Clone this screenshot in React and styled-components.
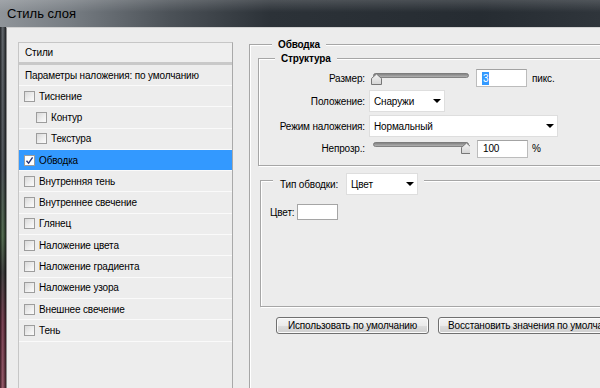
import React from 'react';
import styled, { createGlobalStyle } from 'styled-components';

const Global = createGlobalStyle`
  html, body { margin: 0; padding: 0; background: #ececec; }
  body {
    font-family: "Liberation Sans", Arial, sans-serif;
    font-size: 10px;
    letter-spacing: -0.15px;
    color: #000;
  }
  #root { width: 600px; height: 388px; overflow: hidden; }
`;

const Window = styled.div`
  width: 600px;
  height: 388px;
  display: flex;
  flex-direction: column;
  overflow: hidden;
`;

const TitleBar = styled.div`
  height: 27px;
  flex: none;
  display: flex;
  align-items: center;
  padding-left: 7px;
  background:
    linear-gradient(to bottom, rgba(255,255,255,0.16), rgba(255,255,255,0) 45%),
    linear-gradient(to right, #8f9499 0%, #767c82 12%, #4c5258 28%, #2c3238 45%, #262c32 80%, #2f353b 100%);
  font-family: "Liberation Sans", sans-serif;
  font-size: 13px;
  letter-spacing: 0;
  color: #000;
`;

const Body = styled.div`
  flex: 1;
  display: flex;
  min-height: 0;
`;

const SideFrame = styled.div`
  width: 6px;
  flex: none;
  background:
    linear-gradient(to right, rgba(0,0,0,0.55) 0, rgba(255,255,255,0.14) 45%, rgba(0,0,0,0.6) 100%),
    linear-gradient(to bottom, #4a5056 0%, #3a4046 40%, #3d5a3a 58%, #2a2a2a 68%, #6b2a3e 82%, #8a4456 100%);
`;

const Content = styled.div`
  flex: 1;
  min-width: 0;
  display: flex;
  align-items: flex-start;
  padding: 14px 0 0 11px;
  background: #ececec;
  border-top: 1px solid #d2d2d2;
  border-left: 1px solid #8a8a8a;
  overflow: hidden;
`;

/* ---------- Left list ---------- */
const StylesList = styled.div`
  width: 215px;
  height: 400px;
  flex: none;
  box-sizing: border-box;
  border: 1px solid #c6c6c6;
  border-right-color: #a9a9a9;
  background: #ededed;
`;

const ListHeader = styled.div`
  height: 19px;
  display: flex;
  align-items: center;
  padding-left: 6px;
  border-bottom: 3px solid #c9c9c9;
  background: #efefef;
`;

const ListRow = styled.div`
  box-sizing: border-box;
  height: ${p => p.$h}px;
  display: flex;
  align-items: center;
  gap: 4px;
  padding-left: ${p => p.$indent}px;
  border-bottom: 1px solid #fafafa;
  background: ${p => (p.$selected ? '#3399ff' : 'transparent')};
`;

const Box = styled.span`
  box-sizing: border-box;
  width: 11px;
  height: 11px;
  flex: none;
  display: flex;
  align-items: center;
  justify-content: center;
  border: 1px solid #9d9d9d;
  background: ${p =>
    p.$checked ? '#ffffff' : 'linear-gradient(135deg, #d9d9d9 0%, #f0f0f0 60%, #fbfbfb 100%)'};
`;

function CheckBox({ checked }) {
  return (
    <Box $checked={checked}>
      {checked && (
        <svg width="9" height="9" viewBox="0 0 9 9">
          <path d="M1.5 4.8 L3.6 7.2 L7.6 1.3" fill="none" stroke="#22337a" strokeWidth="1.4" />
        </svg>
      )}
    </Box>
  );
}

/* ---------- Right side ---------- */
const RightPane = styled.div`
  margin: 2px 0 0 16px;
  flex: none;
  width: 420px;
`;

const Group = styled.div`
  border: 1px solid #a6a6a6;
  box-shadow: inset 1px 1px 0 #ffffff, 1px 1px 0 #ffffff;
  margin-top: ${p => p.$mt || 0}px;
  margin-left: ${p => p.$ml || 0}px;
  padding: 0 0 ${p => p.$pb || 0}px ${p => p.$pl || 0}px;
`;

const Legend = styled.div`
  position: relative;
  width: max-content;
  height: ${p => p.$h}px;
  display: flex;
  align-items: center;
  gap: ${p => p.$gap || 5}px;
  margin: ${p => -p.$up}px 0 0 ${p => p.$ml}px;
  padding: 0 ${p => p.$pr || 6}px 0 ${p => p.$plx || 6}px;
  background: #ececec;
  font-weight: ${p => (p.$bold ? 'bold' : 'normal')};
`;

const FormRow = styled.div`
  display: flex;
  align-items: center;
  height: ${p => p.$h}px;
  margin-top: ${p => p.$mt}px;
`;

const Label = styled.span`
  width: 106px;
  flex: none;
  text-align: right;
  margin-right: 4px;
`;

const SliderSvg = styled.svg`
  flex: none;
  align-self: flex-start;
  margin-top: ${p => p.$top}px;
`;

function Slider({ pos, top }) {
  const tx = pos === 'end' ? 92 : 2;
  return (
    <SliderSvg $top={top} width="101" height="13" viewBox="0 0 101 13">
      <defs>
        <linearGradient id={`trk${pos}`} x1="0" y1="0" x2="0" y2="1">
          <stop offset="0" stopColor="#7b7b7b" />
          <stop offset="1" stopColor="#b9b9b9" />
        </linearGradient>
        <linearGradient id={`thm${pos}`} x1="0" y1="0" x2="0" y2="1">
          <stop offset="0" stopColor="#f4f4f4" />
          <stop offset="1" stopColor="#d4d4d4" />
        </linearGradient>
      </defs>
      <rect x="4.5" y="0.5" width="95" height="4" rx="2" fill={`url(#trk${pos})`} stroke="#6f6f6f" strokeWidth="0.8" />
      <path
        d={`M${tx + 5.5} 1 L${tx + 10.5} 5.5 L${tx + 10.5} 11.5 L${tx + 0.5} 11.5 L${tx + 0.5} 5.5 Z`}
        fill={`url(#thm${pos})`}
        stroke="#777"
        strokeWidth="1"
      />
    </SliderSvg>
  );
}

const NumInput = styled.div`
  box-sizing: border-box;
  width: 51px;
  height: 18px;
  flex: none;
  margin-left: ${p => p.$ml}px;
  display: flex;
  align-items: center;
  padding-left: 5px;
  background: #fff;
  border: 1px solid #bcbcbc;
  border-top-color: #a3a3a3;
`;

const Selected = styled.span`
  background: #3399ff;
  color: #fff;
  padding: 0 1px;
  line-height: 13px;
`;

const Unit = styled.span`
  margin-left: ${p => p.$ml}px;
`;

const SelectBox = styled.div`
  box-sizing: border-box;
  width: ${p => p.$w}px;
  height: ${p => p.$h}px;
  flex: none;
  display: flex;
  align-items: center;
  justify-content: space-between;
  padding: 0 3px 0 4px;
  background: #fff;
  border: 1px solid #dedede;
  font-weight: normal;
`;

function Select({ w, h = 22, children }) {
  return (
    <SelectBox $w={w} $h={h}>
      <span>{children}</span>
      <svg width="8" height="4" viewBox="0 0 8 4">
        <path d="M0 0 H8 L4 4 Z" fill="#000" />
      </svg>
    </SelectBox>
  );
}

const ColorRow = styled.div`
  display: flex;
  align-items: center;
  gap: 3px;
  height: 16px;
  margin-top: 9px;
  padding-left: 9px;
`;

const Swatch = styled.span`
  box-sizing: border-box;
  width: 41px;
  height: 16px;
  background: #fff;
  border: 1px solid #a5a5a5;
`;

const ButtonRow = styled.div`
  display: flex;
  gap: 9px;
  margin: 10px 0 0 18px;
`;

const Button = styled.div`
  box-sizing: border-box;
  height: 17px;
  flex: none;
  width: ${p => (p.$w ? `${p.$w}px` : 'auto')};
  padding: 0 9px;
  display: flex;
  align-items: center;
  justify-content: center;
  white-space: nowrap;
  border: 1px solid #707070;
  border-radius: 3px;
  background: linear-gradient(to bottom, #f4f4f4 0%, #ebebeb 50%, #dddddd 51%, #cfcfcf 100%);
  box-shadow: inset 0 0 0 1px #fbfbfb;
`;

const items = [
  { label: 'Тиснение' },
  { label: 'Контур', sub: true },
  { label: 'Текстура', sub: true },
  { label: 'Обводка', checked: true, selected: true },
  { label: 'Внутренняя тень' },
  { label: 'Внутреннее свечение' },
  { label: 'Глянец' },
  { label: 'Наложение цвета' },
  { label: 'Наложение градиента' },
  { label: 'Наложение узора' },
  { label: 'Внешнее свечение' },
  { label: 'Тень' },
];

export default function App() {
  return (
    <>
      <Global />
      <Window>
        <TitleBar>Стиль слоя</TitleBar>
        <Body>
          <SideFrame />
          <Content>
            <StylesList>
              <ListHeader>Стили</ListHeader>
              <ListRow $h={21} $indent={6}>Параметры наложения: по умолчанию</ListRow>
              {items.map(it => (
                <ListRow key={it.label} $h={21.3} $indent={it.sub ? 17 : 5} $selected={it.selected}>
                  <CheckBox checked={it.checked} />
                  <span>{it.label}</span>
                </ListRow>
              ))}
            </StylesList>

            <RightPane>
              <Group $pl={8} $pb={120}>
                <Legend $h={13} $up={7} $ml={14} $bold>Обводка</Legend>
                <Group $mt={7} $pb={6}>
                  <Legend $h={13} $up={7} $ml={16} $bold>Структура</Legend>
                  <FormRow $h={22} $mt={2}>
                    <Label>Размер:</Label>
                    <Slider pos="start" top={6} />
                    <NumInput $ml={6}><Selected>3</Selected></NumInput>
                    <Unit $ml={5}>пикс.</Unit>
                  </FormRow>
                  <FormRow $h={22} $mt={1}>
                    <Label>Положение:</Label>
                    <Select w={76}>Снаружи</Select>
                  </FormRow>
                  <FormRow $h={22} $mt={3}>
                    <Label>Режим наложения:</Label>
                    <Select w={189}>Нормальный</Select>
                  </FormRow>
                  <FormRow $h={21} $mt={1}>
                    <Label>Непрозр.:</Label>
                    <Slider pos="end" top={4} />
                    <NumInput $ml={7}>100</NumInput>
                    <Unit $ml={4}>%</Unit>
                  </FormRow>
                </Group>
                <Group $mt={14} $ml={2} $pb={86}>
                  <Legend $h={22} $up={8} $ml={12} $plx={7} $gap={8}>
                    <span>Тип обводки:</span>
                    <Select w={72}>Цвет</Select>
                  </Legend>
                  <ColorRow>
                    <span>Цвет:</span>
                    <Swatch />
                  </ColorRow>
                </Group>
                <ButtonRow>
                  <Button $w={153}>Использовать по умолчанию</Button>
                  <Button>Восстановить значения по умолчанию</Button>
                </ButtonRow>
              </Group>
            </RightPane>
          </Content>
        </Body>
      </Window>
    </>
  );
}
